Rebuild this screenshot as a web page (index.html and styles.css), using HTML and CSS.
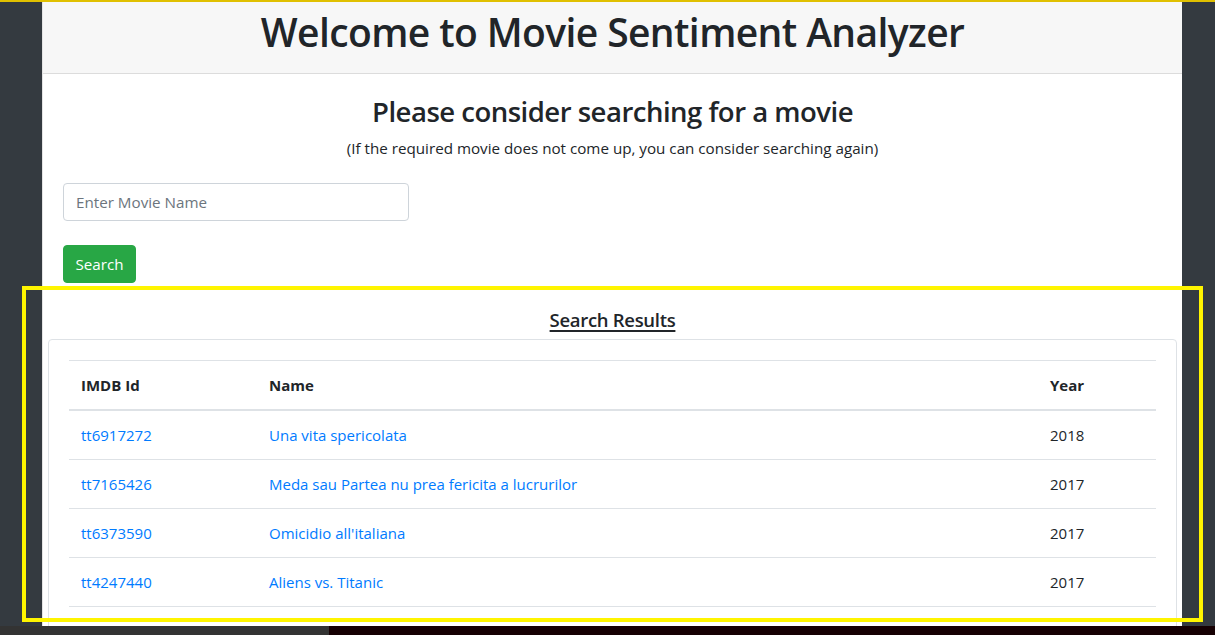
FILE: index.html
```html
<!DOCTYPE html>
<html lang="en">
<head>
<meta charset="utf-8">
<title>Movie Sentiment Analyzer</title>
<link rel="stylesheet" href="styles.css">
</head>
<body>
<div class="page">
  <div class="container">
    <header class="header">
      <h1 class="title">Welcome to Movie Sentiment Analyzer</h1>
    </header>
    <section class="search">
      <h3 class="search-title">Please consider searching for a movie</h3>
      <p class="search-hint">(If the required movie does not come up, you can consider searching again)</p>
      <form class="search-form">
        <input class="input" type="text" placeholder="Enter Movie Name">
        <button class="btn" type="button">Search</button>
      </form>
    </section>
    <section class="results">
      <h5 class="results-title">Search Results</h5>
      <div class="card">
        <table class="table">
          <thead>
            <tr><th class="c-id">IMDB Id</th><th class="c-name">Name</th><th class="c-year">Year</th></tr>
          </thead>
          <tbody>
            <tr><td><a href="#">tt6917272</a></td><td><a href="#">Una vita spericolata</a></td><td>2018</td></tr>
            <tr><td><a href="#">tt7165426</a></td><td><a href="#">Meda sau Partea nu prea fericita a lucrurilor</a></td><td>2017</td></tr>
            <tr><td><a href="#">tt6373590</a></td><td><a href="#">Omicidio all'italiana</a></td><td>2017</td></tr>
            <tr><td><a href="#">tt4247440</a></td><td><a href="#">Aliens vs. Titanic</a></td><td>2017</td></tr>
            <tr><td><a href="#">tt4468954</a></td><td><a href="#">Classe degli Asini</a></td><td>2016</td></tr>
          </tbody>
        </table>
      </div>
    </section>
  </div>
</div>
<div class="highlight"></div>
<div class="taskbar"><span class="taskbar-left"></span><span class="taskbar-right"></span></div>
</body>
</html>
```

FILE: styles.css
```css
html, body {
  margin: 0;
  padding: 0;
  height: 100%;
  overflow: hidden;
}
body {
  background: #343a40;
  font-family: "Open Sans", "Noto Sans", sans-serif;
  color: #212529;
  font-size: 15.2px;
  line-height: 1.5;
  border-top: 2px solid #e0c000;
  box-sizing: border-box;
}
.page {
  padding-left: 42px;
}
.container {
  width: 1140px;
  background: #fff;
  min-height: 700px;
  border-left: 1px solid #e4e4e4;
  box-sizing: border-box;
}
.header {
  background: #f7f7f7;
  border-bottom: 1px solid #dcdcdc;
  height: 71px;
  display: flex;
  align-items: center;
  justify-content: center;
}
.title {
  margin: 0;
  font-size: 39px;
  font-weight: 600;
  line-height: 1.2;
  padding-bottom: 10px;
  letter-spacing: -0.6px;
}
.search {
  padding: 0 20px;
  text-align: center;
}
.search-title {
  margin: 0;
  padding-top: 21px;
  font-size: 27.5px;
  font-weight: 600;
  line-height: 1.2;
  letter-spacing: -0.5px;
}
.search-hint {
  margin: 8px 0 0;
  font-size: 15.2px;
  line-height: 24px;
}
.search-form {
  display: flex;
  flex-direction: column;
  align-items: flex-start;
  gap: 24px;
  padding-top: 23px;
}
.input {
  width: 346px;
  height: 38px;
  box-sizing: border-box;
  border: 1px solid #ced4da;
  border-radius: 4px;
  padding: 6px 12px;
  font-family: inherit;
  font-size: 15.2px;
  color: #495057;
  background: #fff;
}
.input::placeholder {
  color: #6c757d;
}
.btn {
  height: 38px;
  width: 73px;
  box-sizing: border-box;
  background: #28a745;
  border: 1px solid #28a745;
  border-radius: 4px;
  color: #fff;
  font-family: inherit;
  font-size: 15.2px;
  padding: 0;
}
.results {
  padding: 24px 5px 0 5px;
}
.results-title {
  margin: 0 0 6px;
  text-align: center;
  font-size: 18.5px;
  font-weight: 600;
  line-height: 1.4;
  letter-spacing: -0.3px;
  text-decoration: underline;
  text-underline-offset: 3px;
  text-decoration-thickness: 2px;
}
.card {
  border: 1px solid #dee2e6;
  border-radius: 4px;
  padding: 20px;
}
.table {
  width: 100%;
  border-collapse: collapse;
  table-layout: fixed;
  font-size: 15px;
}
.table th, .table td {
  text-align: left;
  padding: 12px 12px;
  line-height: 24px;
  border-top: 1px solid #dee2e6;
  vertical-align: top;
}
.table thead th {
  border-bottom: 2px solid #dee2e6;
  font-weight: 700;
}
.c-id { width: 164px; }
.c-year { width: 94px; }
.table a {
  color: #007bff;
  text-decoration: none;
}
.highlight {
  position: absolute;
  left: 22px;
  top: 286px;
  width: 1181px;
  height: 336px;
  box-sizing: border-box;
  border: 4.5px solid #fff500;
  pointer-events: none;
}
.taskbar {
  position: absolute;
  left: 0;
  right: 0;
  bottom: 0;
  height: 9px;
  display: flex;
}
.taskbar-left {
  width: 329px;
  background: #333333;
}
.taskbar-right {
  flex: 1;
  background: #160003;
}
```
